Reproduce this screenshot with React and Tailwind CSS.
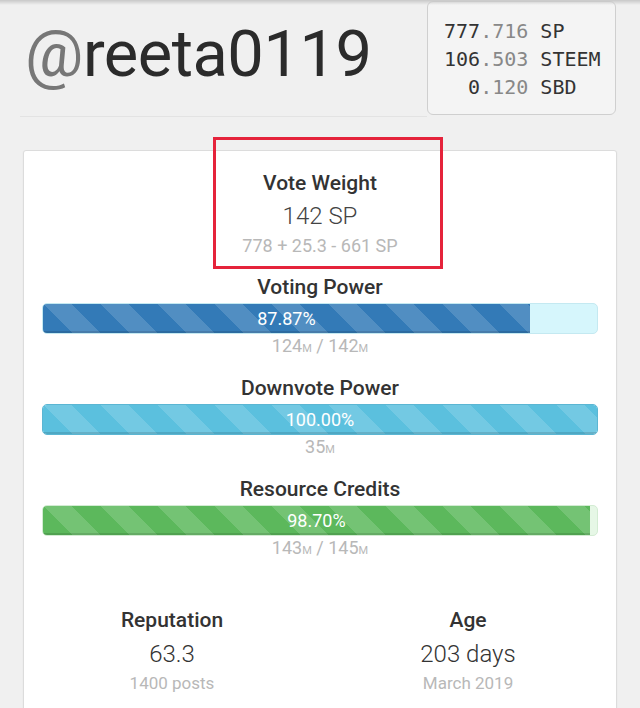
const stripes =
  "bg-[linear-gradient(45deg,rgba(255,255,255,.15)_25%,transparent_25%,transparent_50%,rgba(255,255,255,.15)_50%,rgba(255,255,255,.15)_75%,transparent_75%,transparent)] bg-[length:57px_57px]";

function Unit() {
  return <span className="text-[11px] uppercase">M</span>;
}

function Meter({ title, pct, label, fill, empty, children }) {
  return (
    <div className="flex flex-col items-center">
      <h3 className="text-[21px] leading-[24px] font-medium text-[#333]">{title}</h3>
      <div className={`mt-[4px] h-[31px] w-full rounded-[5px] overflow-hidden flex border ${empty}`}>
        <div
          className={`h-full flex items-center justify-center text-white text-[18px] shadow-[inset_0_-2px_0_rgba(0,0,0,0.12)] ${fill} ${stripes}`}
          style={{ width: `${pct}%` }}
        >
          {label}
        </div>
      </div>
      <div className="mt-[2px] text-[18px] leading-[20px] text-[#b8b8b8]">{children}</div>
    </div>
  );
}

export default function App() {
  return (
    <div className="min-h-screen bg-[#f0f0f0] font-['Roboto',sans-serif] relative overflow-hidden">
      {/* top shadow */}
      <div className="absolute top-0 left-0 right-0 h-[5px] bg-gradient-to-b from-[#c8c8c8] to-transparent z-10" />

      {/* HEADER */}
      <div className="flex items-start h-[118px]">
        <div className="flex-1 ml-[20px] h-[117px] border-b border-[#e3e3e3]">
          <h1 className="pl-[5px] pt-[22px] text-[65px] leading-[65px] text-[#2b2b2b] tracking-[-0.5px]">
            <span className="text-[#777]">@</span>reeta0119
          </h1>
        </div>
        <div className="mt-[1px] mr-[24px] w-[189px] h-[114px] rounded-[6px] border border-[#cfcfcf] bg-[#f4f4f4] pl-[16px] pt-[15px] font-['DejaVu_Sans_Mono',monospace] text-[20px] leading-[28px] text-[#333] whitespace-pre">
          <div>777<span className="text-[#888]">.716</span> SP</div>
          <div>106<span className="text-[#888]">.503</span> STEEM</div>
          <div>  0<span className="text-[#888]">.120</span> SBD</div>
        </div>
      </div>

      {/* CARD */}
      <div className="relative mt-[32px] mx-[23px] bg-white border border-[#dcdcdc] rounded-[3px] shadow-[0_1px_2px_rgba(0,0,0,0.06)] px-[18px] pt-[20px] pb-[40px]">
        <div className="absolute left-[189px] top-[-14px] w-[230px] h-[132px] border-[3px] border-[#e5233b]" />

        <div className="flex flex-col items-center">
          <h3 className="text-[21px] leading-[24px] font-medium text-[#333]">Vote Weight</h3>
          <div className="mt-[6px] text-[24px] leading-[30px] font-light text-[#444]">142 SP</div>
          <div className="mt-[5px] text-[18px] leading-[20px] text-[#b8b8b8]">778 + 25.3 - 661 SP</div>
        </div>

        <div className="mt-[19px] flex flex-col gap-[17px]">
          <Meter title="Voting Power" pct={87.87} label="87.87%" fill="bg-[#337ab7]" empty="bg-[#d6f6fc] border-[#c4e9f1]">
            124<Unit /> / 142<Unit />
          </Meter>
          <Meter title="Downvote Power" pct={100} label="100.00%" fill="bg-[#5bc0de]" empty="bg-[#d6f6fc] border-[#5bb6d3]">
            35<Unit />
          </Meter>
          <Meter title="Resource Credits" pct={98.7} label="98.70%" fill="bg-[#5cb85c]" empty="bg-[#e6f7e6] border-[#d3ecd3]">
            143<Unit /> / 145<Unit />
          </Meter>
        </div>

        <div className="mt-[47px] grid grid-cols-2 -mx-[18px]">
          <div className="flex flex-col items-center">
            <h3 className="text-[21px] leading-[24px] font-medium text-[#333]">Reputation</h3>
            <div className="mt-[7px] text-[24px] leading-[30px] font-light text-[#333]">63.3</div>
            <div className="mt-[4px] text-[17px] leading-[20px] text-[#b8b8b8]">1400 posts</div>
          </div>
          <div className="flex flex-col items-center">
            <h3 className="text-[21px] leading-[24px] font-medium text-[#333]">Age</h3>
            <div className="mt-[7px] text-[24px] leading-[30px] font-light text-[#333]">203 days</div>
            <div className="mt-[4px] text-[17px] leading-[20px] text-[#b8b8b8]">March 2019</div>
          </div>
        </div>
      </div>
    </div>
  );
}
